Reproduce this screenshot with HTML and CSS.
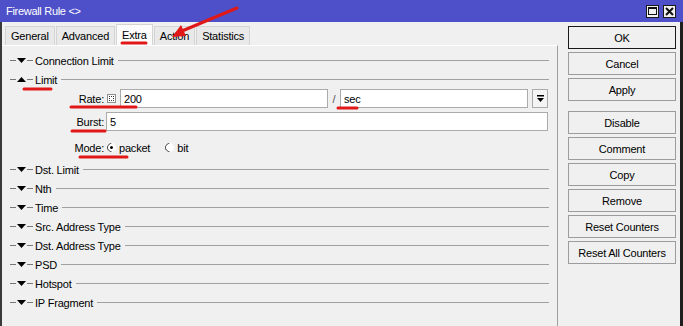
FILE: index.html
```html
<!DOCTYPE html>
<html lang="en">
<head>
    <meta charset="UTF-8">
    <title>Firewall Rule</title>
    <link rel="stylesheet" href="styles.css">
</head>
<body>
    <div class="window">
        <div class="titlebar">
            <span class="title">Firewall Rule &lt;&gt;</span>
            <span class="tb-btn"><span class="max-box"></span></span>
            <span class="tb-btn">
                <svg width="9" height="9" viewBox="0 0 9 9"><path d="M1 1 L8 8 M8 1 L1 8" stroke="#111" stroke-width="2"/></svg>
            </span>
        </div>

        <div class="main">
            <div class="left">
                <div class="tabs">
                    <span class="tab">General</span>
                    <span class="tab">Advanced</span>
                    <span class="tab active">Extra</span>
                    <span class="tab">Action</span>
                    <span class="tab">Statistics</span>
                </div>

                <div class="panel">
                    <div class="sec">
                        <span class="dash"></span>
                        <svg class="caret" width="9" height="5" viewBox="0 0 9 5"><polygon points="0,0 9,0 4.5,5" fill="#000"/></svg>
                        <span class="dash"></span>
                        <span class="sec-title">Connection Limit</span>
                        <span class="sec-line"></span>
                    </div>
                    <div class="sec">
                        <span class="dash"></span>
                        <svg class="caret" width="9" height="5" viewBox="0 0 9 5"><polygon points="0,5 9,5 4.5,0" fill="#000"/></svg>
                        <span class="dash"></span>
                        <span class="sec-title">Limit</span>
                        <span class="sec-line"></span>
                    </div>

                    <div class="limit-body">
                        <div class="field">
                            <span class="lbl">Rate:</span>
                            <span class="chk"></span>
                            <span class="input rate">200</span>
                            <span class="slash">/</span>
                            <span class="input per">sec</span>
                            <span class="drop">
                                <svg width="7" height="7" viewBox="0 0 7 7"><rect x="0" y="0" width="7" height="1.5" fill="#000"/><polygon points="0,3 7,3 3.5,7" fill="#000"/></svg>
                            </span>
                        </div>
                        <div class="field burst">
                            <span class="lbl">Burst:</span>
                            <span class="input wide">5</span>
                        </div>
                        <div class="field mode">
                            <span class="lbl">Mode:</span>
                            <span class="radio on"></span>
                            <span class="opt">packet</span>
                            <span class="radio"></span>
                            <span class="opt">bit</span>
                        </div>
                    </div>

                    <div class="sec">
                        <span class="dash"></span>
                        <svg class="caret" width="9" height="5" viewBox="0 0 9 5"><polygon points="0,0 9,0 4.5,5" fill="#000"/></svg>
                        <span class="dash"></span>
                        <span class="sec-title">Dst. Limit</span>
                        <span class="sec-line"></span>
                    </div>
                    <div class="sec">
                        <span class="dash"></span>
                        <svg class="caret" width="9" height="5" viewBox="0 0 9 5"><polygon points="0,0 9,0 4.5,5" fill="#000"/></svg>
                        <span class="dash"></span>
                        <span class="sec-title">Nth</span>
                        <span class="sec-line"></span>
                    </div>
                    <div class="sec">
                        <span class="dash"></span>
                        <svg class="caret" width="9" height="5" viewBox="0 0 9 5"><polygon points="0,0 9,0 4.5,5" fill="#000"/></svg>
                        <span class="dash"></span>
                        <span class="sec-title">Time</span>
                        <span class="sec-line"></span>
                    </div>
                    <div class="sec">
                        <span class="dash"></span>
                        <svg class="caret" width="9" height="5" viewBox="0 0 9 5"><polygon points="0,0 9,0 4.5,5" fill="#000"/></svg>
                        <span class="dash"></span>
                        <span class="sec-title">Src. Address Type</span>
                        <span class="sec-line"></span>
                    </div>
                    <div class="sec">
                        <span class="dash"></span>
                        <svg class="caret" width="9" height="5" viewBox="0 0 9 5"><polygon points="0,0 9,0 4.5,5" fill="#000"/></svg>
                        <span class="dash"></span>
                        <span class="sec-title">Dst. Address Type</span>
                        <span class="sec-line"></span>
                    </div>
                    <div class="sec">
                        <span class="dash"></span>
                        <svg class="caret" width="9" height="5" viewBox="0 0 9 5"><polygon points="0,0 9,0 4.5,5" fill="#000"/></svg>
                        <span class="dash"></span>
                        <span class="sec-title">PSD</span>
                        <span class="sec-line"></span>
                    </div>
                    <div class="sec">
                        <span class="dash"></span>
                        <svg class="caret" width="9" height="5" viewBox="0 0 9 5"><polygon points="0,0 9,0 4.5,5" fill="#000"/></svg>
                        <span class="dash"></span>
                        <span class="sec-title">Hotspot</span>
                        <span class="sec-line"></span>
                    </div>
                    <div class="sec">
                        <span class="dash"></span>
                        <svg class="caret" width="9" height="5" viewBox="0 0 9 5"><polygon points="0,0 9,0 4.5,5" fill="#000"/></svg>
                        <span class="dash"></span>
                        <span class="sec-title">IP Fragment</span>
                        <span class="sec-line"></span>
                    </div>
                </div>
            </div>

            <div class="actions">
                <button class="btn default">OK</button>
                <button class="btn">Cancel</button>
                <button class="btn group-end">Apply</button>
                <button class="btn">Disable</button>
                <button class="btn">Comment</button>
                <button class="btn">Copy</button>
                <button class="btn">Remove</button>
                <button class="btn">Reset Counters</button>
                <button class="btn">Reset All Counters</button>
            </div>
        </div>

        <!-- red annotation marks drawn over the screenshot -->
        <svg class="marks" width="683" height="326" viewBox="0 0 683 326">
            <g stroke="#e01818" stroke-width="3" stroke-linecap="round" fill="none">
                <line x1="122" y1="43" x2="146" y2="43"/>
                <line x1="24" y1="89" x2="51" y2="89"/>
                <line x1="71" y1="107" x2="136" y2="107"/>
                <line x1="338" y1="108" x2="357" y2="108"/>
                <line x1="72" y1="131" x2="105" y2="131"/>
                <line x1="80" y1="157" x2="127" y2="157"/>
                <line x1="237" y1="8" x2="182" y2="31"/>
            </g>
            <polygon points="172,37 186,36 181,25" fill="#e01818"/>
        </svg>
    </div>
</body>
</html>
```

FILE: styles.css
```css
body {
    margin: 0;
    font-family: "Liberation Sans", Arial, sans-serif;
    font-size: 11px;
    color: #000;
    background-color: #f0f0f0;
}
.window {
    position: relative;
    width: 683px;
    height: 326px;
    overflow: hidden;
    background-color: #f0f0f0;
}
.titlebar {
    height: 22px;
    display: flex;
    align-items: center;
    padding: 0 7px 0 6px;
    background-color: #4e50c9;
    color: #fff;
}
.title {
    flex: 1;
    letter-spacing: -0.3px;
}
.tb-btn {
    width: 11px;
    height: 11px;
    margin-left: 4px;
    border: 1px solid #1a1a1a;
    background-color: #f0f0f0;
    display: flex;
    align-items: center;
    justify-content: center;
}
.max-box {
    width: 7px;
    height: 5px;
    border: 1px solid #111;
    border-top-width: 2px;
}
.main {
    display: flex;
    height: 304px;
    border-left: 2px solid #3a3a3a;
    border-right: 3px solid #1e1e1e;
}
.left {
    width: 556px;
}
.tabs {
    height: 23px;
    display: flex;
    align-items: flex-end;
    padding-left: 3px;
    letter-spacing: -0.2px;
}
.tab {
    height: 19px;
    line-height: 19px;
    padding: 0 5px;
    margin-right: 1px;
    border: 1px solid #d4d4d4;
    border-bottom: none;
    background-color: #e9e9e9;
    box-sizing: border-box;
}
.tab.active {
    height: 21px;
    line-height: 21px;
    background-color: #fbfbfb;
}
.panel {
    height: 281px;
    padding: 5px 8px 0 8px;
    border-top: 1px solid #fff;
    border-right: 1px solid #a0a0a0;
    letter-spacing: -0.2px;
}
.sec {
    display: flex;
    align-items: center;
    height: 19px;
}
.dash {
    width: 6px;
    height: 1px;
    background-color: #777;
}
.caret {
    margin: 0 1px;
}
.sec-title {
    margin: 0 4px 0 2px;
    white-space: nowrap;
}
.sec-line {
    flex: 1;
    height: 1px;
    background-color: #a0a0a0;
}
.limit-body {
    padding: 0 0 3px 2px;
}
.field {
    display: flex;
    align-items: center;
    height: 19px;
}
.field.burst {
    margin-top: 4px;
}
.field.mode {
    margin-top: 7px;
}
.lbl {
    width: 92px;
    padding-right: 2px;
    text-align: right;
    flex-shrink: 0;
}
.chk {
    position: relative;
    width: 9px;
    height: 9px;
    margin: 0 4px 0 1px;
    border: 1px solid #8e8e8e;
    background-color: #fff;
    box-sizing: border-box;
}
.chk::after {
    content: "";
    position: absolute;
    left: 1px;
    top: 1px;
    width: 5px;
    height: 5px;
    border: 1px dotted #333;
    box-sizing: border-box;
}
.input {
    height: 19px;
    line-height: 18px;
    padding-left: 3px;
    border: 1px solid #ababab;
    background-color: #fff;
    box-sizing: border-box;
}
.input.rate {
    width: 208px;
}
.input.per {
    width: 188px;
}
.input.wide {
    width: 442px;
}
.slash {
    width: 12px;
    text-align: center;
    color: #555;
}
.drop {
    width: 16px;
    height: 19px;
    margin-left: 4px;
    border: 1px solid #ababab;
    background-color: #f4f4f4;
    box-sizing: border-box;
    display: flex;
    align-items: center;
    justify-content: center;
}
.radio {
    position: relative;
    width: 9px;
    height: 9px;
    margin: 0 3px 0 1px;
    border-radius: 50%;
    border: 1px solid;
    border-color: #444 #fff #fff #444;
    background-color: #fff;
    transform: rotate(-45deg);
    box-sizing: border-box;
}
.radio.on::after {
    content: "";
    position: absolute;
    left: 2px;
    top: 2px;
    width: 3px;
    height: 3px;
    border-radius: 50%;
    background-color: #000;
}
.opt {
    margin-right: 14px;
}
.actions {
    width: 108px;
    margin-left: 10px;
    padding-top: 4px;
    display: flex;
    flex-direction: column;
}
.btn {
    height: 23px;
    margin-bottom: 3px;
    padding: 0;
    border: 1px solid #9c9c9c;
    background-color: #f0f0f0;
    font-family: "Liberation Sans", Arial, sans-serif;
    font-size: 11px;
    letter-spacing: -0.2px;
    color: #000;
}
.btn.default {
    border-color: #1a1a1a;
}
.btn.group-end {
    margin-bottom: 10px;
}
.marks {
    position: absolute;
    left: 0;
    top: 0;
    pointer-events: none;
}
```
